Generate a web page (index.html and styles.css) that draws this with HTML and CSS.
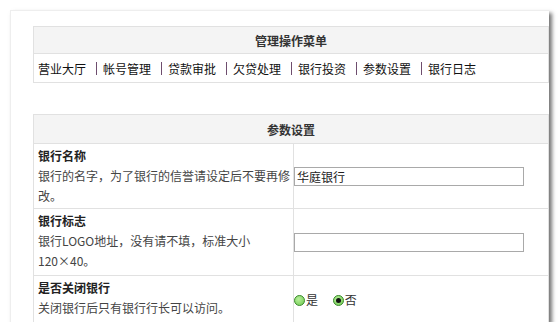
FILE: index.html
```html
<!DOCTYPE html>
<html lang="zh-CN">
<head>
  <meta charset="UTF-8">
  <title>参数设置</title>
  <link rel="stylesheet" href="styles.css">
</head>
<body>
  <div class="panel">
    <table class="box menu">
      <tr><th>管理操作菜单</th></tr>
      <tr>
        <td class="links">
          <a>营业大厅</a><span class="sep"></span><a>帐号管理</a><span class="sep"></span><a>贷款审批</a><span class="sep"></span><a>欠贷处理</a><span class="sep"></span><a>银行投资</a><span class="sep"></span><a>参数设置</a><span class="sep"></span><a>银行日志</a>
        </td>
      </tr>
    </table>

    <table class="box settings">
      <tr><th colspan="2">参数设置</th></tr>
      <tr class="r1">
        <td class="label">
          <b>银行名称</b>
          <p>银行的名字，为了银行的信誉请设定后不要再修改。</p>
        </td>
        <td class="field"><input type="text" value="华庭银行"></td>
      </tr>
      <tr class="r2">
        <td class="label">
          <b>银行标志</b>
          <p>银行LOGO地址，没有请不填，标准大小120×40。</p>
        </td>
        <td class="field"><input type="text" value=""></td>
      </tr>
      <tr class="r3">
        <td class="label">
          <b>是否关闭银行</b>
          <p>关闭银行后只有银行行长可以访问。</p>
        </td>
        <td class="field">
          <span class="radio"></span>是
          <span class="radio on"></span>否
        </td>
      </tr>
      <tr class="r4">
        <td class="label"><b>&nbsp;</b></td>
        <td class="field"></td>
      </tr>
    </table>
  </div>
</body>
</html>
```

FILE: styles.css
```css
html, body {
  margin: 0;
  padding: 0;
  background: #fff;
  font-family: "Noto Sans CJK SC", "Liberation Sans", sans-serif;
  font-size: 12px;
  color: #333;
}

/* 白色面板，右下方有阴影 */
.panel {
  margin: 10px 0 0 10px;
  width: 516px;
  height: 296px;
  padding: 15px 0 0 22px;
  background: #fff;
  border-top: 1px solid #eee;
  border-left: 1px solid #eee;
  box-shadow: 3px 3px 4px rgba(0, 0, 0, 0.55);
  overflow: hidden;
}

.box {
  width: 516px;
  border-collapse: collapse;
}
.box th, .box td {
  border: 1px solid #e1e1e1;
  padding: 0;
}
.box th {
  background: #f4f4f4;
  height: 26px;
  font-weight: bold;
  text-align: center;
  color: #333;
}

.menu {
  margin-bottom: 31px;
}
.menu .links {
  height: 26px;
  padding: 0 0 2px 4px;
  color: #111;
  white-space: nowrap;
}
.links a {
  display: inline-block;
  width: 48px;
  vertical-align: middle;
}
.links .sep {
  display: inline-block;
  width: 1px;
  height: 13px;
  margin: 0 6px 0 10px;
  background: #6e4d6e;
  vertical-align: middle;
}

.settings th {
  height: 28px;
}
.settings .label {
  width: 255px;
  padding: 2px 0 0 4px;
  vertical-align: top;
  line-height: 20px;
}
.label b {
  display: block;
  color: #222;
}
.label p {
  margin: 0;
  color: #444;
}
.r1 td { height: 62px; }
.r2 td { height: 64px; }
.r3 td { height: 45px; }
.r4 td { height: 30px; }

.field {
  padding-left: 5px;
  vertical-align: middle;
}
.field input {
  width: 224px;
  height: 15px;
  padding: 1px 2px;
  border: 1px solid #a9a9a9;
  font: 12px "Noto Sans CJK SC", sans-serif;
  color: #222;
}

/* 绿色单选框 */
.radio {
  display: inline-block;
  width: 9px;
  height: 9px;
  margin: 0 1px 0 0;
  border: 1px solid #3c8a2e;
  border-radius: 50%;
  background: radial-gradient(circle at 40% 35%, #b8f09c, #6cc84c);
  vertical-align: -1px;
  position: relative;
}
.radio.on {
  margin-left: 12px;
}
.radio.on::after {
  content: "";
  position: absolute;
  left: 2px;
  top: 2px;
  width: 5px;
  height: 5px;
  border-radius: 50%;
  background: #111;
}
```
